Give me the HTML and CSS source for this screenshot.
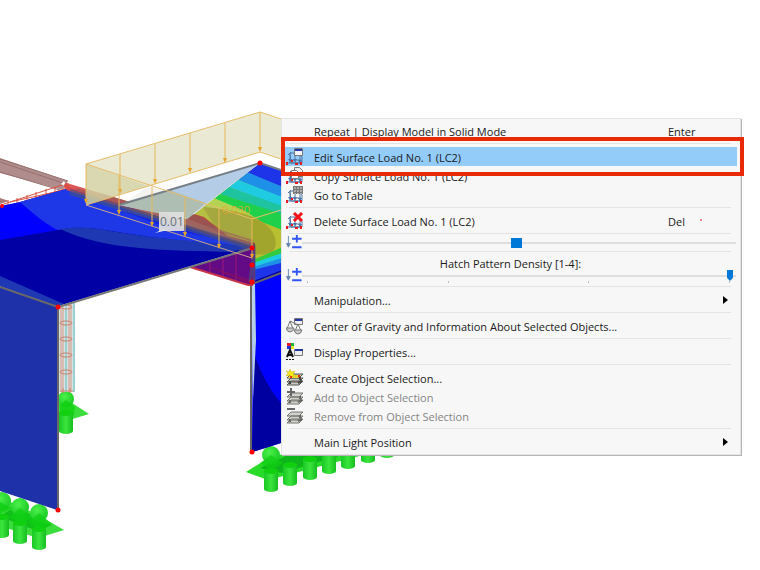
FILE: index.html
```
<!DOCTYPE html>
<html lang="en">
<head>
<meta charset="utf-8">
<title>Surface Load Context Menu</title>
<link rel="stylesheet" href="styles.css">
</head>
<body>
<main class="workspace">
<svg class="model" width="760" height="570" viewBox="0 0 760 570" role="img" aria-label="Structural model with surface load">
  <defs>
    <linearGradient id="cyl" x1="0" x2="1" y1="0" y2="0">
      <stop offset="0" stop-color="#19c725"/><stop offset=".5" stop-color="#3be53d"/><stop offset="1" stop-color="#16bd20"/>
    </linearGradient>
    <radialGradient id="ball" cx=".4" cy=".35" r=".7">
      <stop offset="0" stop-color="#4cf04a"/><stop offset="1" stop-color="#17c922"/>
    </radialGradient>
    <linearGradient id="beam" x1="0" x2="1" y1="0" y2="0">
      <stop offset="0" stop-color="#e04545"/><stop offset=".5" stop-color="#a04540"/><stop offset="1" stop-color="#803a48"/>
    </linearGradient>
    <g id="cylinder">
      <path d="M-7 0v18a7 3 0 0 0 14 0V0z" fill="url(#cyl)"/><ellipse rx="7" ry="3" fill="#10d010"/>
    </g>
    <g id="arrow"><path d="M0 0v36" stroke="#e6b85a"/><path d="M-2 35h4L0 40z" fill="#e8a52c"/></g>
    <clipPath id="contour"><path d="M260 163 281 170V274L253 283V246L188 219z"/></clipPath>
    <clipPath id="slab"><path d="M0 206 20 202 70 188 253 247 58 306 0 286z"/></clipPath>
  </defs>

  <!-- supports behind the walls -->
  <g>
    <path d="M58 404 66 399 89 414 66 421 58 419z" fill="#3cdc3c"/>
    <circle cx="66" cy="399" r="8" fill="url(#ball)"/>
    <path d="M60 405 66 400 75 407 74 415H60z" fill="#0bd00b" opacity=".7"/>
    <use href="#cylinder" x="66" y="413"/>
    <path d="M0 497 38 515 64 530 38 538 0 526z" fill="#3cdc3c"/>
    <path d="M0 516 18 505 38 521 52 525 38 531 18 524z" fill="#10c218"/>
    <use href="#cylinder" x="2" y="517"/><use href="#cylinder" x="20" y="523"/><use href="#cylinder" x="39" y="529"/>
    <g fill="url(#ball)"><circle cx="2" cy="501" r="9"/><circle cx="20" cy="507" r="9"/><circle cx="39" cy="513" r="9"/></g>
    <path d="M0 502 12 508 0 514zM10 517 20 508 32 518 20 524zM29 522 39 513 52 524 39 530z" fill="#0fcf13" opacity=".75"/>
    <path d="M246 472 267 459 300 448H390L268 480z" fill="#29db29"/>
    <path d="M260 468 290 454H345L282 473z" fill="#0fb61b"/>
    <use href="#cylinder" x="387" y="437"/><use href="#cylinder" x="368" y="442"/><use href="#cylinder" x="348" y="448"/>
    <use href="#cylinder" x="329" y="453"/><use href="#cylinder" x="310" y="459"/><use href="#cylinder" x="290" y="465"/><use href="#cylinder" x="271" y="471"/>
    <circle cx="271" cy="455" r="9" fill="url(#ball)"/>
    <path d="M260 463 271 455 283 463 271 470z" fill="#0fcf13" opacity=".7"/>
  </g>

  <!-- rear rail and bracing -->
  <path d="M0 158 68 181 63 190 0 173z" fill="#b18c8c"/>
  <path d="M0 159 68 181M0 162 66 184M0 172 60 190" fill="none" stroke="#94706f"/>
  <path d="M0 198l9 3-9 3z" fill="#a77777"/>
  <path d="M1 205 65 184M2 208 68 188M10 202 64 190M8 200v6M17 198v6M27 195v6M36 192v6M46 189v6M55 187v6" fill="none" stroke="#d75345"/>

  <!-- roof slab -->
  <g clip-path="url(#slab)">
    <path d="M0 180H260V310H0z" fill="#00f"/>
    <path d="M20 202C36 216 48 226 60 231L150 250 260 255V180H20z" fill="#1e38e8"/>
    <path d="M0 240 64 229Q80 226 105 230L150 237 205 243 253 247 58 310H0z" fill="#0000a4"/>
    <path d="M60 229Q82 225 110 231L150 237 253 247 230 252C170 250 105 251 60 229z" fill="#1e38b4"/>
    <path d="M0 276 64 304 58 310 0 290z" fill="#1e38b4"/>
    <path d="M120 210 175 224 225 241 170 229z" fill="#0a16df" opacity=".6"/>
  </g>
  <path d="M0 287 57 307V510L0 491z" fill="#1e31a9"/>

  <!-- left column -->
  <path d="M58 306 75 302V392H58z" fill="#d4e4e4"/>
  <path d="M61 306V392M63 306V392M69 304V392M71 304V392" stroke="#d99583"/>
  <path d="M66 304V392M74 303V392" stroke="#9bcfd0" stroke-width="2"/>
  <g fill="none" stroke="#cb8170"><ellipse cx="66" cy="307" rx="6" ry="2"/><ellipse cx="66" cy="323" rx="6" ry="2"/><ellipse cx="66" cy="339" rx="6" ry="2"/><ellipse cx="66" cy="355" rx="6" ry="2"/><ellipse cx="66" cy="372" rx="6" ry="2"/><path d="M60 391h13M63 388v5M70 388v5"/></g>
  <path d="M0 287 58 307V510" fill="none" stroke="#686868" stroke-width="2"/>

  <!-- stress contour -->
  <g clip-path="url(#contour)">
    <path d="M180 150H285V290H180z" fill="#b8c031"/>
    <path d="M260 163 285 171V188L247 173z" fill="#1e34e8"/>
    <path d="M247 172 285 188V199L238 180z" fill="#1e90e8"/>
    <path d="M238 180 285 198V208L229 187z" fill="#1ecbe1"/>
    <path d="M229 187 285 207V216L220 194z" fill="#1ec3a0"/>
    <path d="M220 194 285 215V231L262 222 214 199z" fill="#1ed04a"/>
    <path d="M214 198 245 211 262 222 206 207z" fill="#b5d352"/>
    <path d="M203 207Q268 212 275 238T228 249z" fill="#a2a52d"/>
    <path d="M188 212 204 217 228 236 253 244V250L180 224z" fill="#b13a30"/>
    <path d="M253 260 285 246V290H253z" fill="#32cb40"/>
    <path d="M253 263 285 252V290H253z" fill="#1ecbe1"/>
    <path d="M253 267 285 257V290H253z" fill="#1e90e8"/>
    <path d="M253 270 285 262V290H253z" fill="#1e34e8"/>
    <path d="M253 281 285 269V290H253z" fill="#0000a4"/>
  </g>

  <!-- right wall -->
  <path d="M253 283 281 273V443L252 452z" fill="#00f"/>
  <path d="M254 354Q266 386 281 403V443L252 452z" fill="#0000a0"/>
  <path d="M252 284H255L256 340 253 400z" fill="#b4cfe4"/>
  <path d="M252 284 281 273M251 248V452" fill="none" stroke="#666" stroke-width="2"/>

  <!-- edge beam -->
  <path d="M70 184 140 205 190 213 204 219 228 236 255 243V249L66 190z" fill="url(#beam)" opacity=".9"/>
  <path d="M70 192 253 248" stroke="#435284" stroke-width="6" opacity=".65"/>
  <path d="M76 189 253 244M100 194 253 241" stroke="#9a5755" stroke-width="2" opacity=".7"/>
  <path d="M190 267 248 249H255V283L248 285z" fill="#630b86"/>
  <path d="M190 267 248 285H253" fill="none" stroke="#c83449" stroke-width="2"/>
  <path d="M210 262v10M223 258v18M236 254v26" stroke="#9b1a78"/>
  <path d="M205 265 248 279 255 278V283L246 283z" fill="#860f62" opacity=".7"/>
  <path d="M239 251 254 247V282M254 247 250 282" fill="none" stroke="#504780" stroke-width="3" opacity=".8"/>

  <!-- translucent load planes -->
  <path d="M119 205 260 163 187 219z" fill="#b4cce6"/>
  <path d="M119 205 170 190 205 203 187 219z" fill="#aebfb8"/>
  <path d="M86 164 260 112 281 119V159L260 152 86 205z" fill="#dcdbb8" opacity=".6"/>
  <path d="M86 164 148 186 86 205z" fill="#cdcd99" opacity=".6"/>
  <path d="M148 186 252 219V246L122 205z" fill="#b6b99a" opacity=".16"/>
  <path d="M58 307 253 248" stroke="#777" stroke-width="2"/>
  <path d="M119 205 260 163 281 170" fill="none" stroke="#767f86" stroke-width="2"/>
  <g fill="none" stroke="#e6bc6c">
    <path d="M86 164 260 112 281 119M86 205 260 152 281 159M86 164 252 219 281 210"/>
    <path d="M86 205 252 258" stroke="#c9a58c"/>
  </g>
  <use href="#arrow" x="86" y="164"/><use href="#arrow" x="120" y="154"/><use href="#arrow" x="155" y="144"/><use href="#arrow" x="190" y="133"/><use href="#arrow" x="225" y="123"/><use href="#arrow" x="260" y="112"/>
  <use href="#arrow" x="119" y="175"/><use href="#arrow" x="152" y="187"/><use href="#arrow" x="185" y="197"/><use href="#arrow" x="219" y="209"/><use href="#arrow" x="252" y="219"/>

  <path d="M155 233 163 229 168 230z" fill="#e1e4e8"/>
  <path d="M159 212h25v19h-25z" fill="#dedede" opacity=".94"/>
  <text class="load-value" x="160" y="226">0.01</text>
  <text class="load-value load-value--ghost" x="222" y="214">0.030</text>

  <path d="M61 184 64 181 67 187z" fill="#fff"/>
  <g fill="#f00"><circle cx="2" cy="206" r="2"/><circle cx="67" cy="186" r="3" fill="#d85045"/><circle cx="260" cy="163" r="2.5"/><circle cx="252" cy="248" r="2.5"/><circle cx="252" cy="265" r="2.5"/><circle cx="252" cy="282" r="2.5"/><circle cx="58" cy="307" r="2.5"/><circle cx="58" cy="510" r="2.5"/><circle cx="252" cy="452" r="2.5"/></g>
</svg>

<svg class="symbols" aria-hidden="true">
  <symbol id="i-load" viewBox="0 0 18 18">
    <path d="M4 5h9l3 4v6H5zM2 7l3-3M4 5v10M9 5v10M14 7v9M1 15h13M5 12h10" fill="none" stroke="#5277a5"/>
    <path d="M2 11h4l-2 3zM7 11h4l-2 3zM12 12h4l-2 3z" fill="#4873ac"/>
    <path d="M0 14h2v3H0zM5 12h2v2H5zM9 15h3v2H9zM14 14h2v3h-2z" fill="#e51d22"/>
  </symbol>
  <symbol id="i-window" viewBox="0 0 18 18"><path d="M8.500.5h8v7h-8z" fill="#f5f5f5" stroke="#777"/><path d="M9 1h7v2H9z" fill="#2336a5"/></symbol>
  <symbol id="i-pages" viewBox="0 0 18 18"><path d="M8.500.5h5l3 3v6h-8z" fill="#eee" stroke="#777"/><path d="M5.500 3.500h5l2 2v6h-7z" fill="#fff" stroke="#777"/></symbol>
  <symbol id="i-grid" viewBox="0 0 18 18"><path d="M7 0h10v8H7z" fill="#aaa"/><path d="M7 .5h10M7 3.500h10M7 6.500h10M7.500 0v8M10.500 0v8M13.500 0v8M16.500 0v8" stroke="#777"/></symbol>
  <symbol id="i-cross" viewBox="0 0 18 18"><path d="M8 1l8 8M16 1 8 9" stroke="#f01218" stroke-width="3"/></symbol>
  <symbol id="i-scale" viewBox="0 0 16 16"><path d="M2 1v10M0 9h4l-2 4z" fill="#6685b2" stroke="#6685b2"/><path d="M11 0v8M6 4h10M6 13h10" stroke="#3155f5" stroke-width="2"/></symbol>
  <symbol id="i-gravity" viewBox="0 0 18 18"><path d="M8.500 1.500h8v6h-8z" fill="#eee" stroke="#777"/><path d="M9 2h7v2H9z" fill="#2336a5"/><path d="M4 4 1 12h6zM4 4l8 4M12 7l-3 7h6z" fill="none" stroke="#777"/><path d="M0 11h8q-1 4-4 4t-4-4M8 13h8q-1 4-4 4t-4-4" fill="#ccc" stroke="#777"/></symbol>
  <symbol id="i-display" viewBox="0 0 18 18"><path d="M1 0h4v3H1z" fill="#e21f26"/><path d="M5 0h3v3H5z" fill="#1eb83a"/><path d="M1 3h4v3H1z" fill="#1c38df"/><path d="M5 3h3v3H5z" fill="#eee427"/><path d="M8.500 6.500h8v6h-8z" fill="#eee" stroke="#777"/><path d="M9 6h8v2H9z" fill="#2336a5"/><path d="m1 14 3-7 3 7M2 12h4" fill="none" stroke="#111" stroke-width="2"/><path d="M0 16.500h2m1 0h2m1 0h2" stroke="#111"/></symbol>
  <symbol id="i-layers" viewBox="0 0 18 18"><path d="M5 5h12l-4 4H1zM5 9h12l-4 4H1zM5 12h12l-4 4H1z" fill="#c9c9c2" stroke="#55554f"/><path d="M14 8v3M4 12v3M12 14l4-2" stroke="#44443f" stroke-width="2"/></symbol>
  <symbol id="i-star" viewBox="0 0 18 18"><path d="M4 6h11l-3 3H2z" fill="#f3d829"/><path d="m4 0 1 3 4-1-2 3 3 2H7L5 9 4 6 0 7l2-3-2-2 3 1z" fill="#f8e916" stroke="#c5b51a" stroke-width=".5"/><path d="M4 7h2v2H4zM12 6h2v2h-2z" fill="#e8301c"/></symbol>
  <symbol id="i-plus" viewBox="0 0 18 18"><path d="M5 0v8M1 4h8" stroke="#444" stroke-width="2"/></symbol>
  <symbol id="i-minus" viewBox="0 0 18 18"><path d="M1 2h8" stroke="#444" stroke-width="2"/></symbol>
</svg>

<div class="menu" aria-label="Surface load actions">
  <button class="item"><span class="icon"></span><span class="label">Repeat | Display Model in Solid Mode</span><span class="key">Enter</span></button>
  <hr>
  <button class="item item--active"><svg class="icon"><use href="#i-load"/><use href="#i-window"/></svg><span class="label">Edit Surface Load No. 1 (LC2)</span></button>
  <button class="item"><svg class="icon"><use href="#i-load"/><use href="#i-pages"/></svg><span class="label">Copy Surface Load No. 1 (LC2)</span></button>
  <button class="item"><svg class="icon"><use href="#i-load"/><use href="#i-grid"/></svg><span class="label">Go to Table</span></button>
  <hr>
  <button class="item"><svg class="icon"><use href="#i-load"/><use href="#i-cross"/></svg><span class="label">Delete Surface Load No. 1 (LC2)</span><span class="key">Del<i class="speck"></i></span></button>
  <hr>
  <div class="slider-row"><svg class="scale"><use href="#i-scale"/></svg><input class="slider" type="range" min="0" max="200" value="99" aria-label="Load size"></div>
  <hr>
  <div class="density">
    <label class="density-label" for="density">Hatch Pattern Density [1-4]:</label>
    <div class="slider-row"><svg class="scale"><use href="#i-scale"/></svg><input class="slider slider--pointer" id="density" type="range" min="1" max="4" value="4"></div>
    <div class="ticks"><i></i><i></i><i></i><i></i></div>
  </div>
  <hr>
  <button class="item"><span class="icon"></span><span class="label">Manipulation...</span><span class="more"></span></button>
  <hr>
  <button class="item"><svg class="icon"><use href="#i-gravity"/></svg><span class="label">Center of Gravity and Information About Selected Objects...</span></button>
  <hr>
  <button class="item"><svg class="icon"><use href="#i-display"/></svg><span class="label">Display Properties...</span></button>
  <hr>
  <button class="item"><svg class="icon"><use href="#i-layers"/><use href="#i-star"/></svg><span class="label">Create Object Selection...</span></button>
  <button class="item" disabled><svg class="icon"><use href="#i-layers"/><use href="#i-plus"/></svg><span class="label">Add to Object Selection</span></button>
  <button class="item" disabled><svg class="icon"><use href="#i-layers"/><use href="#i-minus"/></svg><span class="label">Remove from Object Selection</span></button>
  <hr>
  <button class="item"><span class="icon"></span><span class="label">Main Light Position</span><span class="more"></span></button>
  <div class="callout"></div>
</div>
</main>
</body>
</html>
```
FILE: styles.css
```
* { box-sizing: border-box; }
body { margin: 0; background: #fff; color: #1a1a1a; font: 11px/19px "Open Sans", "Noto Sans", sans-serif; }
.workspace { position: relative; min-height: 100vh; overflow: hidden; }
.model { display: block; }
.symbols { position: absolute; width: 0; height: 0; }
.load-value { fill: #66747f; font-size: 12px; }
.load-value--ghost { fill: #e3a62a; font-size: 11px; opacity: .8; }

.menu {
  position: absolute; left: 281px; right: 19px; top: 118px;
  padding: 2px 3px 3px 2px;
  background: #f7f7f7; border: 1px solid #e4e4e4;
  box-shadow: 1px 1px 0 #b4b4b4;
}
.menu hr { height: 1px; margin: 3px 6px 3px 5px; border: 0; background: #e4e4e4; }
.item {
  display: flex; align-items: center; width: 100%; height: 19px; padding: 1px 0 0;
  border: 0; background: none; color: inherit; font: inherit; text-align: left;
}
.item--active { background: #93cbf9; }
.item:disabled { color: #858585; }
.item:disabled .icon { opacity: .8; }
.icon { flex: none; width: 18px; height: 18px; margin: 0 10px 0 2px; }
.label { flex: 1; white-space: nowrap; }
.key { position: relative; width: 69px; }
.speck { position: absolute; left: 32px; top: 7px; width: 2px; height: 2px; background: #f0808a; }
.more { width: 0; margin-right: 9px; border: 4px solid transparent; border-left: 5px solid #000; border-right: 0; }

.slider-row { display: flex; align-items: center; height: 11px; padding: 0 1px 0 2px; }
.scale { flex: none; width: 16px; height: 15px; }
.slider {
  flex: 1; min-width: 0; height: 11px; margin: 0; appearance: none;
  background: linear-gradient(#dedede, #dedede) center / 100% 2px no-repeat;
}
.slider::-webkit-slider-thumb { appearance: none; width: 11px; height: 10px; background: #0078d7; }
.slider--pointer { padding-right: 3px; }
.slider--pointer::-webkit-slider-thumb { width: 6px; height: 11px; clip-path: polygon(0 0, 100% 0, 100% 70%, 50% 100%, 0 70%); }
.density { height: 28px; }
.density-label { display: block; height: 15px; line-height: 17px; text-align: center; }
.ticks { display: flex; justify-content: space-between; padding: 0 7px 0 23px; }
.ticks i { width: 1px; height: 2px; background: #bbb; }

.callout { position: absolute; left: -1px; right: -4px; top: 18px; height: 39px; border: 4px solid #e92a08; pointer-events: none; }
```
